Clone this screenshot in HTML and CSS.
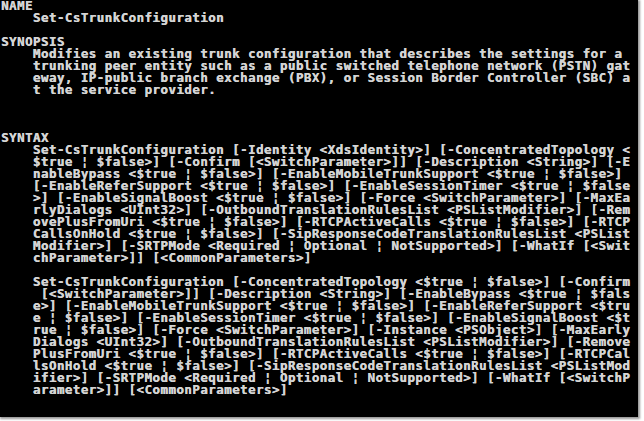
FILE: index.html
```html
<!DOCTYPE html>
<html>
<head>
<meta charset="utf-8">
<link rel="stylesheet" href="styles.css">
</head>
<body>
<div class="console"><pre class="out">NAME
    Set-CsTrunkConfiguration

SYNOPSIS
    Modifies an existing trunk configuration that describes the settings for a
    trunking peer entity such as a public switched telephone network (PSTN) gat
    eway, IP-public branch exchange (PBX), or Session Border Controller (SBC) a
    t the service provider.



SYNTAX
    Set-CsTrunkConfiguration [-Identity &lt;XdsIdentity&gt;] [-ConcentratedTopology &lt;
    $true ¦ $false&gt;] [-Confirm [&lt;SwitchParameter&gt;]] [-Description &lt;String&gt;] [-E
    nableBypass &lt;$true ¦ $false&gt;] [-EnableMobileTrunkSupport &lt;$true ¦ $false&gt;]
    [-EnableReferSupport &lt;$true ¦ $false&gt;] [-EnableSessionTimer &lt;$true ¦ $false
    &gt;] [-EnableSignalBoost &lt;$true ¦ $false&gt;] [-Force &lt;SwitchParameter&gt;] [-MaxEa
    rlyDialogs &lt;UInt32&gt;] [-OutboundTranslationRulesList &lt;PSListModifier&gt;] [-Rem
    ovePlusFromUri &lt;$true ¦ $false&gt;] [-RTCPActiveCalls &lt;$true ¦ $false&gt;] [-RTCP
    CallsOnHold &lt;$true ¦ $false&gt;] [-SipResponseCodeTranslationRulesList &lt;PSList
    Modifier&gt;] [-SRTPMode &lt;Required ¦ Optional ¦ NotSupported&gt;] [-WhatIf [&lt;Swit
    chParameter&gt;]] [&lt;CommonParameters&gt;]

    Set-CsTrunkConfiguration [-ConcentratedTopology &lt;$true ¦ $false&gt;] [-Confirm
     [&lt;SwitchParameter&gt;]] [-Description &lt;String&gt;] [-EnableBypass &lt;$true ¦ $fals
    e&gt;] [-EnableMobileTrunkSupport &lt;$true ¦ $false&gt;] [-EnableReferSupport &lt;$tru
    e ¦ $false&gt;] [-EnableSessionTimer &lt;$true ¦ $false&gt;] [-EnableSignalBoost &lt;$t
    rue ¦ $false&gt;] [-Force &lt;SwitchParameter&gt;] [-Instance &lt;PSObject&gt;] [-MaxEarly
    Dialogs &lt;UInt32&gt;] [-OutboundTranslationRulesList &lt;PSListModifier&gt;] [-Remove
    PlusFromUri &lt;$true ¦ $false&gt;] [-RTCPActiveCalls &lt;$true ¦ $false&gt;] [-RTCPCal
    lsOnHold &lt;$true ¦ $false&gt;] [-SipResponseCodeTranslationRulesList &lt;PSListMod
    ifier&gt;] [-SRTPMode &lt;Required ¦ Optional ¦ NotSupported&gt;] [-WhatIf [&lt;SwitchP
    arameter&gt;]] [&lt;CommonParameters&gt;]</pre></div>
</body>
</html>
```
FILE: styles.css
```css
html, body {
  margin: 0;
  padding: 0;
  background: #ffffff;
}
body {
  width: 644px;
  height: 421px;
}
.console {
  width: 638px;
  height: 417px;
  background: #000000;
  box-shadow: 1px 1px 2px 1px #9a9a9a;
}
.out {
  margin: 0;
  padding: 0 0 0 1px;
  font-family: "DejaVu Sans Mono", monospace;
  font-weight: bold;
  font-size: 12.5px;
  letter-spacing: 0.44px;
  line-height: 12px;
  color: #d4d4d4;
  text-shadow: 0.4px 0 0 #d4d4d4;
  white-space: pre;
}
```
